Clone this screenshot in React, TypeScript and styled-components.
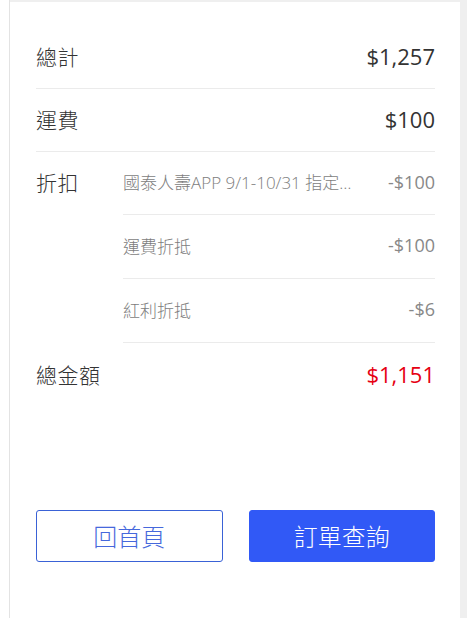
import React from "react";
import styled, { createGlobalStyle } from "styled-components";

const GlobalStyle = createGlobalStyle`
  html, body { margin: 0; padding: 0; background: #ffffff; }
  * { box-sizing: border-box; }
  body { font-family: "Open Sans", "Noto Sans CJK TC", sans-serif; }
`;

const Page = styled.div`
  display: flex;
  width: 100%;
  min-height: 618px;
  padding-left: 9px;
`;

const Frame = styled.div`
  flex: 1;
  min-width: 0;
  display: flex;
  background: #efefef;
  border-left: 1px solid #e3e3e3;
  padding: 2px 7px 0 0;
`;

const Card = styled.div`
  flex: 1;
  min-width: 0;
  background: #ffffff;
  padding: 24px 25px 0 26px;
  display: flex;
  flex-direction: column;
`;

const Row = styled.div<{ $divided?: boolean; $h?: number }>`
  display: flex;
  align-items: center;
  justify-content: space-between;
  padding-bottom: 3px;
  height: ${(p) => (p.$h ?? 62) + (p.$divided ? 1 : 0)}px;
  border-bottom: ${(p) => (p.$divided ? "1px solid #ebebeb" : "none")};
`;

const Label = styled.span`
  font-family: "Noto Sans CJK TC", sans-serif;
  font-size: 21px;
  font-weight: 300;
  color: #333333;
  letter-spacing: 0.5px;
`;

const Amount = styled.span<{ $red?: boolean }>`
  font-size: 22px;
  color: ${(p) => (p.$red ? "#e60012" : "#333333")};
`;

const Discount = styled.div`
  display: grid;
  grid-template-columns: 87px minmax(0, 1fr);
`;

const DiscountLabel = styled(Label)`
  line-height: 60px;
  height: 63px;
`;

const SubList = styled.div`
  display: flex;
  flex-direction: column;
  min-width: 0;
`;

const SubRow = styled.div<{ $h: number }>`
  display: flex;
  align-items: center;
  gap: 20px;
  padding-bottom: 3px;
  height: ${(p) => p.$h}px;
  border-bottom: 1px solid #ebebeb;
`;

const SubText = styled.span`
  flex: 1;
  min-width: 0;
  font-size: 17px;
  font-weight: 300;
  color: #7d7d7d;
  white-space: nowrap;
  overflow: hidden;
  text-overflow: ellipsis;
`;

const SubAmount = styled.span`
  font-size: 18px;
  color: #888888;
`;

const Buttons = styled.div`
  display: grid;
  grid-template-columns: minmax(0, 1fr) minmax(0, 1fr);
  gap: 26px;
  margin-top: 103px;
`;

const Button = styled.button<{ $primary?: boolean }>`
  height: 52px;
  border-radius: 3px;
  border: 1px solid ${(p) => (p.$primary ? "#3159f6" : "#3a62d6")};
  background: ${(p) => (p.$primary ? "#3159f6" : "#ffffff")};
  color: ${(p) => (p.$primary ? "#ffffff" : "#4668dc")};
  font-family: "Noto Sans CJK TC", sans-serif;
  font-weight: 300;
  font-size: 24px;
  cursor: pointer;
  padding: 0 0 2px;
`;

const discounts = [
  { text: "國泰人壽APP 9/1-10/31 指定商品滿額折抵", amount: "-$100", h: 63 },
  { text: "運費折抵", amount: "-$100", h: 64 },
  { text: "紅利折抵", amount: "-$6", h: 64 },
];

export default function App() {
  return (
    <>
      <GlobalStyle />
      <Page>
        <Frame>
          <Card>
            <Row $divided>
              <Label>總計</Label>
              <Amount>$1,257</Amount>
            </Row>
            <Row $divided>
              <Label>運費</Label>
              <Amount>$100</Amount>
            </Row>
            <Discount>
              <DiscountLabel>折扣</DiscountLabel>
              <SubList>
                {discounts.map((d) => (
                  <SubRow key={d.text} $h={d.h}>
                    <SubText>{d.text}</SubText>
                    <SubAmount>{d.amount}</SubAmount>
                  </SubRow>
                ))}
              </SubList>
            </Discount>
            <Row $h={64}>
              <Label>總金額</Label>
              <Amount $red>$1,151</Amount>
            </Row>
            <Buttons>
              <Button>回首頁</Button>
              <Button $primary>訂單查詢</Button>
            </Buttons>
          </Card>
        </Frame>
      </Page>
    </>
  );
}
